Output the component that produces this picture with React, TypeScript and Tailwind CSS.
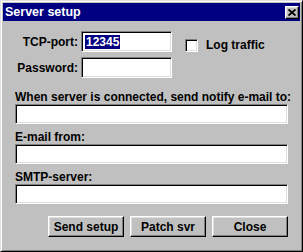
const raised =
  'border border-t-white border-l-white border-r-black border-b-black shadow-[inset_-1px_-1px_#808080,inset_1px_1px_#dfdfdf]'
const sunken =
  'border border-t-[#808080] border-l-[#808080] border-r-white border-b-white shadow-[inset_1px_1px_#000,inset_-1px_-1px_#dfdfdf] bg-white'

function Field({ label }: { label: string }) {
  return (
    <div className="flex flex-col">
      <span className="h-[13px] leading-[13px]">{label}</span>
      <div className={`h-[20px] w-[273px] ${sunken}`} />
    </div>
  )
}

function Button({ children }: { children: React.ReactNode }) {
  return (
    <button className={`h-[21px] w-[76px] flex items-center justify-center bg-[#c0c0c0] ${raised}`}>
      {children}
    </button>
  )
}

export default function App() {
  return (
    <div className="w-[303px] h-[252px] bg-[#c0c0c0] p-[3px] border border-t-[#dfdfdf] border-l-[#dfdfdf] border-r-black border-b-black shadow-[inset_1px_1px_white,inset_-1px_-1px_#808080] font-['Liberation_Sans',Arial,sans-serif] font-bold text-[12px] text-black">
      <div className="h-[18px] bg-[#000080] flex items-center justify-between pl-[2px] pr-[1px] -mx-[1px] -mt-[1px]">
        <span className="text-white text-[12.5px] leading-[18px]">Server setup</span>
        <div className={`w-[14px] h-[13px] bg-[#c0c0c0] flex items-center justify-center ${raised}`}>
          <svg width="8" height="7" viewBox="0 0 8 7">
            <path d="M0.5 0.5 L7.5 6.5 M7.5 0.5 L0.5 6.5" stroke="black" strokeWidth="1.8" />
          </svg>
        </div>
      </div>

      <div className="pl-[11px] pt-[10px]">
        <div className="flex">
          <div className="flex flex-col gap-[5px]">
            <div className="flex items-center">
              <span className="w-[66px] text-right pr-[3px]">TCP-port:</span>
              <div className={`h-[21px] w-[91px] flex items-center pl-[3px] ${sunken}`}>
                <span className="bg-[#000080] text-white leading-[14px] px-[1px]">12345</span>
              </div>
            </div>
            <div className="flex items-center">
              <span className="w-[66px] text-right pr-[3px]">Password:</span>
              <div className={`h-[21px] w-[91px] ${sunken}`} />
            </div>
          </div>
          <div className="flex items-start gap-[8px] ml-[13px] mt-[8px]">
            <div className={`w-[13px] h-[13px] ${sunken}`} />
            <span className="leading-[13px]">Log traffic</span>
          </div>
        </div>

        <div className="flex flex-col gap-[7px] mt-[13px]">
          <Field label="When server is connected, send notify e-mail to:" />
          <Field label="E-mail from:" />
          <Field label="SMTP-server:" />
        </div>

        <div className="flex justify-end gap-[6px] mt-[12px] w-[273px]">
          <Button>Send setup</Button>
          <Button>Patch svr</Button>
          <Button>Close</Button>
        </div>
      </div>
    </div>
  )
}
